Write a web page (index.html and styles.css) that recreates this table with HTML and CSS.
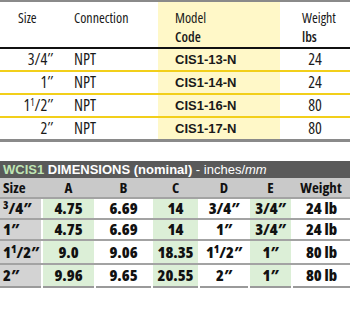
FILE: index.html
```html
<!DOCTYPE html>
<html>
<head>
<meta charset="utf-8">
<link rel="stylesheet" href="styles.css">
</head>
<body>
<table class="spec">
  <colgroup>
    <col class="c-size"><col class="c-conn"><col class="c-model"><col class="c-wt">
  </colgroup>
  <thead>
    <tr>
      <th class="h-size">Size</th>
      <th class="h-conn">Connection</th>
      <th class="h-model model">Model<br><b>Code</b></th>
      <th class="h-wt">Weight<br><b>lbs</b></th>
    </tr>
  </thead>
  <tbody>
    <tr><td class="size">3/4″</td><td class="conn">NPT</td><td class="model code">CIS1-13-N</td><td class="wt">24</td></tr>
    <tr><td class="size">1″</td><td class="conn">NPT</td><td class="model code">CIS1-14-N</td><td class="wt">24</td></tr>
    <tr><td class="size">1<sup class="sf">1</sup>/2″</td><td class="conn">NPT</td><td class="model code">CIS1-16-N</td><td class="wt">80</td></tr>
    <tr><td class="size">2″</td><td class="conn">NPT</td><td class="model code">CIS1-17-N</td><td class="wt">80</td></tr>
  </tbody>
</table>

<div class="dims">
  <div class="title"><span class="tg">WCIS1</span> <b>DIMENSIONS (nominal)</b> - inches/<i>mm</i></div>
  <table class="dim">
    <colgroup>
      <col class="d-size"><col class="d-a"><col class="d-b"><col class="d-c"><col class="d-d"><col class="d-e"><col class="d-w">
    </colgroup>
    <thead>
      <tr><th class="ls">Size</th><th>A</th><th>B</th><th>C</th><th>D</th><th>E</th><th>Weight</th></tr>
    </thead>
    <tbody>
      <tr><td class="ls"><sup class="df">3</sup>/4″</td><td class="g">4.75</td><td>6.69</td><td class="g">14</td><td>3/4″</td><td class="g">3/4″</td><td>24 lb</td></tr>
      <tr><td class="ls">1″</td><td class="g">4.75</td><td>6.69</td><td class="g">14</td><td>1″</td><td class="g">3/4″</td><td>24 lb</td></tr>
      <tr class="tall"><td class="ls">1<sup class="df">1</sup>/2″</td><td class="g">9.0</td><td>9.06</td><td class="g">18.35</td><td>1<sup class="df">1</sup>/2″</td><td class="g">1″</td><td>80 lb</td></tr>
      <tr class="last"><td class="ls">2″</td><td class="g">9.96</td><td>9.65</td><td class="g">20.55</td><td>2″</td><td class="g">1″</td><td>80 lb</td></tr>
    </tbody>
  </table>
</div>
</body>
</html>
```

FILE: styles.css
```css
html, body {
  margin: 0;
  padding: 0;
  background: #fff;
  width: 350px;
}

/* ---------- top spec table ---------- */
.spec {
  width: 350px;
  border-collapse: collapse;
  table-layout: fixed;
  border-top: 2px solid #8a8a8a;
  border-bottom: 3px solid #8a8a8a;
  font-family: "Open Sans", sans-serif;
  font-stretch: 75%;
  color: #1a1a1a;
}
.c-size { width: 58px; }
.c-conn { width: 100px; }
.c-model { width: 122px; }
.c-wt { width: 70px; }

.spec th {
  font-weight: normal;
  font-size: 14px;
  line-height: 19px;
  text-align: left;
  vertical-align: top;
  height: 47px;
  padding: 6px 0 0 0;
  box-sizing: border-box;
  border-bottom: 2px solid #111;
}
.spec th b { font-weight: 600; }
.spec .h-size { padding-left: 18px; }
.spec .h-conn { padding-left: 16px; }
.spec .h-model { padding-left: 17px; }
.spec .h-wt { padding-left: 22px; }

.model { background: #fff8c8; }

.spec td {
  height: 21px;
  padding: 0;
  font-size: 16px;
  line-height: 21px;
  border-bottom: 2px solid #f2cf1a;
  vertical-align: middle;
}
.spec tbody tr:last-child td { border-bottom: 0; }
.spec .size { text-align: right; padding-right: 5px; }
.spec .conn { padding-left: 16px; }
.spec .code {
  padding-left: 17px;
  font-family: "Liberation Sans", Arial, sans-serif;
  font-stretch: normal;
  font-weight: bold;
  font-size: 13px;
}
.spec .wt { text-align: center; }
.sf { font-size: 10px; line-height: 0; vertical-align: 5px; }

/* ---------- dimensions table ---------- */
.dims { margin-top: 19px; }
.title {
  height: 17px;
  background: #5a5a5a;
  color: #fff;
  font-family: "Liberation Sans", Arial, sans-serif;
  font-size: 13px;
  line-height: 18px;
  padding-left: 3px;
  white-space: nowrap;
}
.title .tg { color: #bfe5b4; font-weight: bold; }

.dim {
  width: 350px;
  border-collapse: collapse;
  table-layout: fixed;
  font-family: "Open Sans", sans-serif;
  font-stretch: 87.5%;
  font-weight: 800;
  color: #111;
  border-bottom: 2px solid #9a9a9a;
}
.d-size { width: 42px; }
.d-a { width: 53px; }
.d-b { width: 57px; }
.d-c { width: 47px; }
.d-d { width: 50px; }
.d-e { width: 43px; }
.d-w { width: 58px; }

.dim th {
  background: #c9c9c9;
  height: 19px;
  padding: 0;
  font-size: 15px;
  font-stretch: 75%;
  line-height: 19px;
  text-align: center;
  border-bottom: 2px solid #a3a3a3;
}
.dim td {
  height: 19px;
  padding: 0;
  font-size: 16px;
  line-height: 19px;
  text-align: center;
  border-bottom: 2px solid #a3a3a3;
  border-left: 2px solid #fff;
}
.dim td:first-child { border-left: 0; }
.dim tr.tall td { height: 22px; }
.dim tr.last td { height: 21px; border-bottom: 0; }
.dim .ls { text-align: left; padding-left: 3px; }
.dim td.ls { background: #d3d3d3; }
.dim .g { background: #dcefd7; }
.df { font-size: 11px; line-height: 0; vertical-align: 5px; }
```
